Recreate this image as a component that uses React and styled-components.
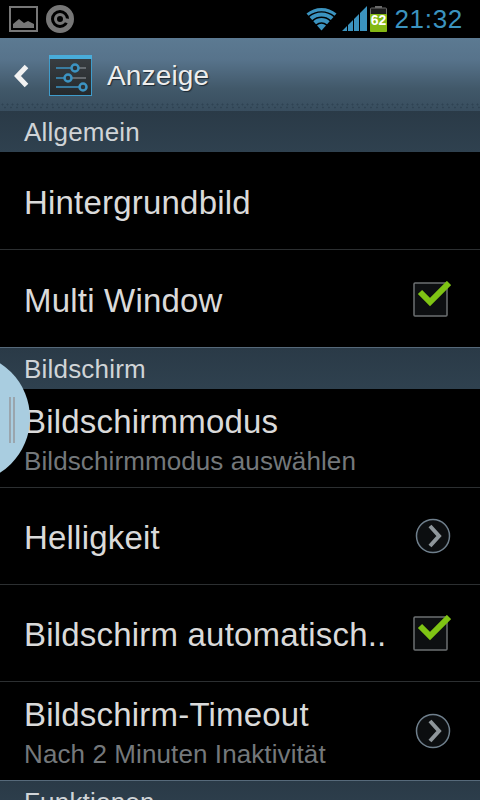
import * as React from "react";
import styled, { createGlobalStyle } from "styled-components";

const GlobalStyle = createGlobalStyle`
  html, body {
    margin: 0;
    padding: 0;
    background: #000;
  }
  body {
    font-family: "Liberation Sans", Arial, sans-serif;
  }
`;

const Screen = styled.div`
  position: relative;
  width: 480px;
  height: 800px;
  overflow: hidden;
  background: #000;
`;

const StatusBar = styled.div`
  height: 38px;
  display: flex;
  align-items: center;
  justify-content: space-between;
  padding: 0 17px 0 9px;
  background: #000;
`;

const StatusGroup = styled.div`
  display: flex;
  align-items: center;
  gap: ${(p) => p.$gap || 0}px;
`;

const Clock = styled.span`
  margin-left: 7px;
  font-size: 26px;
  letter-spacing: 0.7px;
  color: #3b93bf;
`;

const ActionBar = styled.div`
  height: 73px;
  box-sizing: border-box;
  display: flex;
  align-items: center;
  padding: 2px 0 0 14px;
  background:
    radial-gradient(circle, #2f4353 0.8px, transparent 1.2px) 0 65px / 5px 3px repeat-x,
    radial-gradient(circle, #2f4353 0.8px, transparent 1.2px) 2px 68px / 6px 3px repeat-x,
    linear-gradient(#5c7a92 0%, #57738b 30%, #415869 70%, #384d5e 100%);
`;

const Title = styled.span`
  margin-left: 15px;
  font-size: 28px;
  letter-spacing: 0.15px;
  color: #ededed;
  text-shadow: 1px 1px 1px #1c2833;
`;

const IconSlot = styled.span`
  display: flex;
  margin-left: ${(p) => p.$left || 0}px;
`;

const Section = styled.div`
  height: ${(p) => p.$height || 41}px;
  box-sizing: border-box;
  padding: 2px 0 0 24px;
  display: flex;
  align-items: center;
  font-size: 26px;
  letter-spacing: 0.2px;
  color: #d0d4d7;
  background: linear-gradient(#2a3a47, #2f414f);
  border-top: ${(p) => (p.$top ? "none" : "1px solid #56697a")};
`;

const Row = styled.div`
  height: ${(p) => p.$height || 97}px;
  box-sizing: border-box;
  display: flex;
  align-items: center;
  justify-content: space-between;
  padding: 0 29px 0 24px;
  border-bottom: ${(p) => (p.$last ? "none" : "1px solid #2c2f31")};
`;

const RowText = styled.div`
  display: flex;
  flex-direction: column;
  min-width: 0;
  padding-top: ${(p) => (p.$double ? 6 : 4)}px;
`;

const RowTitle = styled.div`
  font-size: 33px;
  line-height: 40px;
  letter-spacing: 0.2px;
  color: #dadada;
  white-space: nowrap;
`;

const RowSub = styled.div`
  font-size: 26px;
  line-height: 38px;
  letter-spacing: 0.1px;
  color: #74787b;
  white-space: nowrap;
`;

const FloatHandle = styled.div`
  position: absolute;
  left: -100px;
  top: 353px;
  width: 130px;
  height: 130px;
  border-radius: 50%;
  background: radial-gradient(circle, #a9cde0 90%, #d4e7f0 100%);
`;

const Grip = styled.div`
  position: absolute;
  left: 109px;
  top: 44px;
  width: 2px;
  height: 46px;
  border-left: 2px solid #9aa5ad;
  border-right: 2px solid #9aa5ad;
`;

const Gallery = () => (
  <svg width="29" height="26" viewBox="0 0 29 26">
    <rect x="1" y="1" width="27" height="24" fill="none" stroke="#777" strokeWidth="2" />
    <path d="M4 22 L4 18 L10 13 L15 17 L19 15 L25 18 L25 22 Z" fill="#777" />
  </svg>
);

const Sync = () => (
  <svg width="28" height="28" viewBox="0 0 28 28">
    <circle cx="14" cy="14" r="11.500" fill="none" stroke="#777" strokeWidth="5" />
    <circle cx="14" cy="14" r="4.500" fill="none" stroke="#777" strokeWidth="3" />
    <path d="M18 13 L18 17 L24 19 L24 14 Z" fill="#777" />
  </svg>
);

const Wifi = () => (
  <svg width="31" height="24" viewBox="0 0 30 24">
    <path d="M15 23.500 L10.500 18.500 A6.500 6.500 0 0 1 19.500 18.500 Z" fill="#3b93bf" />
    <path d="M9.500 17.300 L6.800 14.300 A12 12 0 0 1 23.200 14.300 L20.500 17.300 A8.500 8.500 0 0 0 9.500 17.300 Z" fill="#3b93bf" />
    <path d="M5.700 13 L3 10 A18 18 0 0 1 27 10 L24.300 13 A14.500 14.500 0 0 0 5.700 13 Z" fill="#3b93bf" />
    <path d="M2 8.800 L0 6.500 A23 23 0 0 1 30 6.500 L28 8.800 A20.500 20.500 0 0 0 2 8.800 Z" fill="#3b93bf" />
  </svg>
);

const Signal = () => (
  <svg width="25" height="26" viewBox="0 0 25 26">
    <path d="M0 25 L5 20 V25 Z M6 25 V19 L11 14 V25 Z M12 25 V13 L17 8 V25 Z M18 25 V7 L25 0 V25 Z" fill="#3b93bf" />
  </svg>
);

const Battery = () => (
  <svg width="17" height="26" viewBox="0 0 17 26">
    <rect x="5" y="0" width="7" height="2" fill="#6b6b6b" />
    <rect x="0.500" y="2" width="16" height="23.500" rx="1" fill="#1c1c1c" stroke="#6b6b6b" />
    <rect x="0" y="8" width="17" height="18" rx="1" fill="#84b814" />
    <text x="8.500" y="18.500" textAnchor="middle" fontSize="14" fontWeight="bold" fontFamily="Liberation Sans, sans-serif" fill="#fff">62</text>
  </svg>
);

const Back = () => (
  <svg width="15" height="24" viewBox="0 0 15 24">
    <path d="M12.500 2.500 L3.500 12 L12.500 21.500" fill="none" stroke="#f2f2f2" strokeWidth="5" />
  </svg>
);

const Slider = ({ y, x }) => (
  <g>
    <path d={`M7 ${y} H${x}`} stroke="#3c93c2" strokeWidth="1.500" />
    <path d={`M${x} ${y} H37`} stroke="#777d82" strokeWidth="1.500" />
    <circle cx={x} cy={y} r="3.500" fill="#2b3236" stroke="#3c93c2" strokeWidth="2.500" />
  </g>
);

const AppIcon = () => (
  <svg width="43" height="41" viewBox="0 0 43 41">
    <defs>
      <linearGradient id="iconBg" x1="0" y1="0" x2="0" y2="1">
        <stop offset="0" stopColor="#3a3f43" />
        <stop offset="1" stopColor="#25292c" />
      </linearGradient>
    </defs>
    <rect x="0.500" y="0.500" width="42" height="40" fill="url(#iconBg)" stroke="#3f9ccb" />
    <rect x="0" y="0" width="43" height="4" fill="#49addb" />
    <Slider y={13} x={26} />
    <Slider y={23} x={19} />
    <Slider y={32} x={34} />
  </svg>
);

const Check = () => (
  <svg width="38" height="36" viewBox="0 0 38 36">
    <rect x="1" y="2" width="33" height="33" rx="1" fill="#0d0f11" stroke="#6c7072" strokeWidth="1.500" />
    <path d="M7 11 L17 21 L36 2" fill="none" stroke="#7fc414" strokeWidth="6" />
  </svg>
);

const Arrow = () => (
  <svg width="36" height="36" viewBox="0 0 36 36">
    <circle cx="18" cy="18" r="16.500" fill="#0c0e10" stroke="#6f7f8c" strokeWidth="1.500" />
    <path d="M15 8 L24 18 L15 28" fill="none" stroke="#8f969b" strokeWidth="4" />
  </svg>
);

export default function App() {
  return (
    <Screen>
      <GlobalStyle />
      <StatusBar>
        <StatusGroup $gap={8}>
          <Gallery />
          <Sync />
        </StatusGroup>
        <StatusGroup>
          <Wifi />
          <IconSlot $left={5}>
            <Signal />
          </IconSlot>
          <IconSlot $left={3}>
            <Battery />
          </IconSlot>
          <Clock>21:32</Clock>
        </StatusGroup>
      </StatusBar>
      <ActionBar>
        <Back />
        <IconSlot $left={20}>
          <AppIcon />
        </IconSlot>
        <Title>Anzeige</Title>
      </ActionBar>
      <Section $top>Allgemein</Section>
      <Row $height={98}>
        <RowText>
          <RowTitle>Hintergrundbild</RowTitle>
        </RowText>
      </Row>
      <Row $last>
        <RowText>
          <RowTitle>Multi Window</RowTitle>
        </RowText>
        <Check />
      </Row>
      <Section $height={42}>Bildschirm</Section>
      <Row $height={99}>
        <RowText $double>
          <RowTitle>Bildschirmmodus</RowTitle>
          <RowSub>Bildschirmmodus auswählen</RowSub>
        </RowText>
      </Row>
      <Row>
        <RowText>
          <RowTitle>Helligkeit</RowTitle>
        </RowText>
        <Arrow />
      </Row>
      <Row>
        <RowText>
          <RowTitle>Bildschirm automatisch..</RowTitle>
        </RowText>
        <Check />
      </Row>
      <Row $height={98} $last>
        <RowText $double>
          <RowTitle>Bildschirm-Timeout</RowTitle>
          <RowSub>Nach 2 Minuten Inaktivität</RowSub>
        </RowText>
        <Arrow />
      </Row>
      <Section>Funktionen</Section>
      <FloatHandle>
        <Grip />
      </FloatHandle>
    </Screen>
  );
}
